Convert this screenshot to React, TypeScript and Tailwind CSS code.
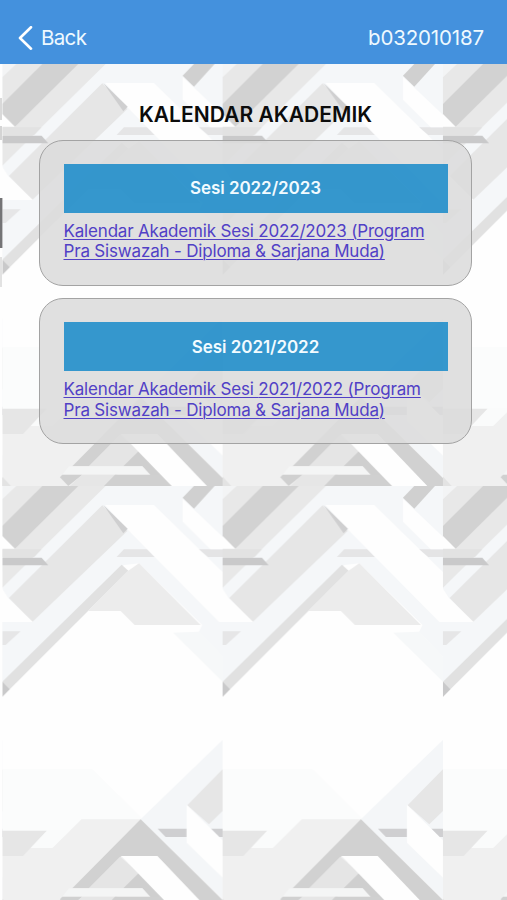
type Session = {
  year: string
}

const sessions: Session[] = [{ year: "2022/2023" }, { year: "2021/2022" }]

// One tile of the geometric wallpaper, repeated by the svg pattern
function WallpaperTile() {
  return (
    <g>
      <rect width="661" height="1266" fill="#fefefe" />

      {/* upper half */}
      <path fill="#f5f7f9" d="M0 0H661V512L590 437L600 417L410 232L365 237L0 600Z" />
      <path fill="#f6f8f9" d="M513 440L590 437L661 512V587Z" />
      <path fill="#e1e1e1" d="M358 236L378 254L0 632V587Z" />
      <path fill="#c9c9ca" d="M0 587L22 610L0 632Z" />
      <path fill="#ececec" d="M378 254L410 232L595 417H397L355 375H257Z" />
      <path fill="#e5e5e6" d="M365 190H435L458 213H343Z" />
      <path fill="#e6e6e6" d="M20 336L300 58L375 135L90 408Z" />
      <path fill="#fefefe" d="M308 57H455L661 258V408H650L375 130Z" />
      <path fill="#cfcfd0" d="M303 57L376 128L363 142Z" />
      <path fill="#fefefe" d="M0 308L18 336L92 408H0Z" />
      <path fill="#e6e6e7" d="M0 436H55L10 477H0Z" />
      <path fill="#e8e8e8" d="M0 0H310L0 305Z" />
      <path fill="#f3f4f5" d="M0 0H42L0 40Z" />
      <path fill="#d2d2d2" d="M120 0H228L38 188L0 155V120Z" />
      <path fill="#fefefe" d="M0 150L38 188H0Z" />
      <path fill="#e2e2e2" d="M0 190H118L96 213H0Z" />
      <path fill="#c9c9ca" d="M0 215H118L138 238H0Z" />
      <path fill="#e4e4e5" d="M590 190H661V213H617Z" />
      <path fill="#d0d0d0" d="M575 0H637L575 68L541 35Z" />
      <path fill="#fefefe" d="M541 38L661 152V190H624L541 107Z" />

      {/* lower half */}
      <path fill="#fbfcfc" d="M0 850H270L420 1000L238 1010L150 1086H0Z" />
      <path fill="#f0f0f0" d="M0 1086H150L238 1000H418L661 1240V1266H0Z" />
      <path fill="#f4f6f8" d="M661 762L415 1000L661 1240Z" />
      <path fill="#e6e6e6" d="M661 850L555 958L620 1015L661 975Z" />
      <path fill="#cfcfd1" d="M466 1028H553V1053H490ZM626 1028H661V1053H650Z" />
      <path fill="#fefefe" d="M553 956L661 1063V1175L553 1070Z" />
      <path fill="#e6e6e6" d="M0 1034H134L62 1110H0Z" />
      <path fill="#fafbfb" d="M134 1034H203L150 1086H86Z" />
      <path fill="#d1d1d1" d="M415 1000L661 1243V1266H612L465 1110H357L260 1207H210Z" />
      <path fill="#e5e5e5" d="M353 1112L410 1160L365 1207H260Z" />
      <path fill="#cfcfcf" d="M410 1160L510 1266H475L420 1207H363Z" />
      <path fill="#fefefe" d="M357 1110H465L614 1266H508Z" />
      <path fill="#f4f5f5" d="M200 1207H420L443 1232H180Z" />
      <path fill="#d0d0d0" d="M180 1232H240L198 1266L173 1240Z" />
      <path fill="#e6e6e6" d="M240 1232H345L308 1266H203Z" />
      <path fill="#d0d0d0" d="M338 1232H470L508 1266H305Z" />
      <path fill="#e3e3e3" d="M0 1238L26 1266H0Z" />
    </g>
  )
}

function Wallpaper() {
  return (
    <svg className="col-start-1 row-start-1 h-[836px] w-[507px]" viewBox="0 64 507 836" aria-hidden="true">
      <defs>
        <pattern id="tile" x="2.3" y="64" width="220.33" height="422" patternUnits="userSpaceOnUse" viewBox="0 0 661 1266">
          <WallpaperTile />
        </pattern>
      </defs>
      <rect x="0" y="64" width="507" height="836" fill="#fefefe" />
      <rect x="2.3" y="64" width="505" height="836" fill="url(#tile)" />
      {/* slivers of the page underneath */}
      <rect x="0" y="98" width="2" height="22" fill="#d9d9d9" />
      <rect x="0" y="126" width="2" height="14" fill="#d4d4d4" />
      <rect x="0" y="198" width="2.4" height="50" fill="#747476" />
      <rect x="0" y="257" width="2" height="30" fill="#e2e2e2" />
    </svg>
  )
}

function SessionCard({ year }: Session) {
  return (
    <section className="h-[146px] rounded-[24px] border border-[#a3a3a3] bg-[#dcdcdc]/88 px-[23.5px] pt-[23px]">
      <h2 className="flex h-[49px] items-center justify-center bg-[#1c8cca]/88 pt-[2px] text-[17px] font-semibold tracking-[-0.06px] text-[#f2fbff]">
        Sesi {year}
      </h2>
      <a
        href="#"
        className="mt-[8px] block text-[17px] leading-[20.5px] tracking-[-0.18px] whitespace-nowrap text-[#5140c6] underline decoration-1 underline-offset-2"
      >
        Kalendar Akademik Sesi {year} (Program
        <br />
        Pra Siswazah - Diploma &amp; Sarjana Muda)
      </a>
    </section>
  )
}

export default function App() {
  return (
    <div className="h-[900px] w-[507px] overflow-hidden bg-white font-['Inter','Liberation_Sans',sans-serif]">
      <header className="flex h-16 items-start justify-between bg-[#4491dd] pt-[24px] pr-[23px] pl-[17px] text-[20.5px] leading-[28px] text-[#eef9ff]">
        <button className="flex items-center gap-[8px] tracking-[-0.65px]">
          <svg width="16" height="25" viewBox="0 0 16 25" fill="none">
            <path d="M14 1.2L3 12L14 22.7" stroke="white" strokeWidth="2.6" strokeLinecap="round" strokeLinejoin="round" />
          </svg>
          Back
        </button>
        <span className="tracking-[-0.15px]">b032010187</span>
      </header>
      <div className="grid">
        <Wallpaper />
        <main className="z-10 col-start-1 row-start-1 flex flex-col pt-[37px] pr-[35px] pl-[39px]">
          <h1 className="text-center text-[21px] leading-[28px] font-semibold tracking-[0.05px] text-[#0c0c0c]">
            KALENDAR AKADEMIK
          </h1>
          <div className="mt-[10.5px] flex flex-col gap-[12.5px]">
            {sessions.map((s) => (
              <SessionCard key={s.year} year={s.year} />
            ))}
          </div>
        </main>
      </div>
    </div>
  )
}
